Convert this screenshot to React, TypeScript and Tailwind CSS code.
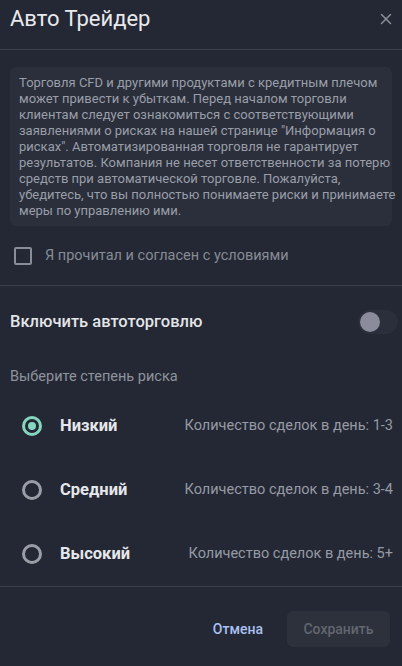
import { X } from "lucide-react";

const RISKS = [
  { label: "Низкий", desc: "Количество сделок в день: 1-3", selected: true },
  { label: "Средний", desc: "Количество сделок в день: 3-4", selected: false },
  { label: "Высокий", desc: "Количество сделок в день: 5+", selected: false },
];

const DISCLAIMER = [
  "Торговля CFD и другими продуктами с кредитным плечом",
  "может привести к убыткам. Перед началом торговли",
  "клиентам следует ознакомиться с соответствующими",
  'заявлениями о рисках на нашей странице "Информация о',
  'рисках". Автоматизированная торговля не гарантирует',
  "результатов. Компания не несет ответственности за потерю",
  "средств при автоматической торговле. Пожалуйста,",
  "убедитесь, что вы полностью понимаете риски и принимаете",
  "меры по управлению ими.",
];

function Radio({ on }: { on: boolean }) {
  return on ? (
    <span className="w-5 h-5 rounded-full border-[3px] border-[#86d6bf] flex items-center justify-center shrink-0">
      <span className="w-2 h-2 rounded-full bg-[#86d6bf]" />
    </span>
  ) : (
    <span className="w-5 h-5 rounded-full border-[3px] border-[#9b9da7] shrink-0" />
  );
}

export default function App() {
  return (
    <div
      className="w-[402px] h-[666px] bg-[#232834] text-[#e6e7ea] flex flex-col overflow-hidden"
      style={{ fontFamily: "Roboto, 'Noto Sans', sans-serif" }}
    >
      {/* Header */}
      <div className="h-[50px] flex items-center justify-between pl-[10px] pr-[7px] border-b border-[#3b404b] shrink-0">
        <h1 className="text-[22px] leading-none text-[#e8e9ec] pb-[12px]">Авто Трейдер</h1>
        <X size={18} className="text-[#8a8e99] mb-[12px]" strokeWidth={2} />
      </div>

      {/* Disclaimer */}
      <div className="px-[10px] pt-[17px] shrink-0">
        <div className="bg-[#2a2f3b] rounded-md pl-[9px] pt-[8px] pb-[7px] text-[13px] leading-[16px] text-[#9a9ea8]">
          {DISCLAIMER.map((l) => (
            <div key={l} className="whitespace-nowrap">{l}</div>
          ))}
        </div>
      </div>

      {/* Agreement */}
      <div className="flex items-center gap-[13px] pl-[14px] h-[60px] border-b border-[#3b404b] shrink-0">
        <span className="w-[18px] h-[18px] border-2 border-[#8a8d99] rounded-[2px]" />
        <span className="text-[14.5px] text-[#878b95]">Я прочитал и согласен с условиями</span>
      </div>

      {/* Toggle */}
      <div className="flex items-center justify-between pl-[10px] pr-[4px] h-[72px] shrink-0">
        <span className="text-[16.5px] font-medium text-[#e4e5e8]">Включить автоторговлю</span>
        <span className="w-[40px] h-[24px] rounded-full bg-[#2a2f3b] flex items-center pl-[2px]">
          <span className="w-[20px] h-[20px] rounded-full bg-[#8a8c9c]" />
        </span>
      </div>

      <div className="pl-[10px] pt-[9px] text-[14.5px] leading-[20px] text-[#8f939d] shrink-0">
        Выберите степень риска
      </div>

      {/* Risk options */}
      <div className="flex flex-col pt-[7px] shrink-0">
        {RISKS.map((r) => (
          <div key={r.label} className="flex items-center h-[64px] pl-[22px] pr-[9px]">
            <Radio on={r.selected} />
            <span className="ml-[18px] text-[16.5px] font-bold text-[#e6e7ea]">{r.label}</span>
            <span className="ml-auto text-[14.5px] text-[#979aa4]">{r.desc}</span>
          </div>
        ))}
      </div>

      {/* Footer */}
      <div className="mt-auto border-t border-[#3b404b] h-[80px] pt-[5px] flex items-center justify-end gap-[24px] pr-[12px] shrink-0">
        <button className="text-[14px] font-medium text-[#a9c1f2]">Отмена</button>
        <button className="w-[103px] h-[36px] rounded-md bg-[#2d313c] text-[14px] font-medium text-[#62666f]">
          Сохранить
        </button>
      </div>
    </div>
  );
}
